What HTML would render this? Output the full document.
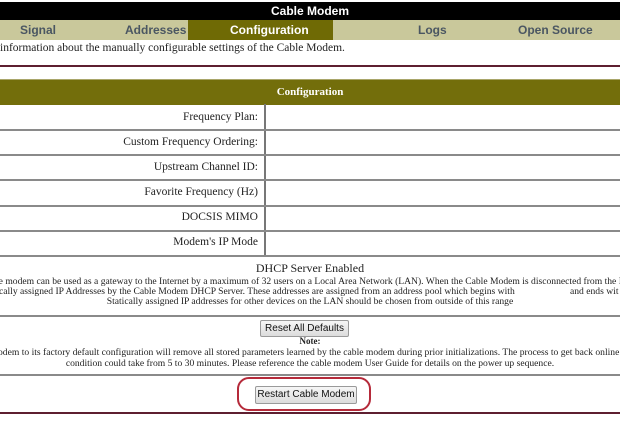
<!DOCTYPE html><html><head><style>
body{margin:0;width:620px;height:423px;overflow:hidden;background:#fff;position:relative;font-family:"Liberation Serif",serif;}
.a{position:absolute;white-space:nowrap}
.nav{font-family:"Liberation Sans",sans-serif;font-weight:bold;font-size:12px;color:#4a5662;top:23px}
.lab{font-size:11.5px;color:#222;right:362px}
.hl{position:absolute;left:0;width:620px;height:2px;background:#8a8a8a}
.btn{position:absolute;white-space:nowrap;font-family:"Liberation Sans",sans-serif;font-size:10px;color:#111;background:linear-gradient(#f6f6f6,#dcdcdc);border:1px solid #9a9a9a;border-radius:2px;text-align:center;line-height:15px}
.t{font-size:10px;color:#222;left:0;width:620px;text-align:center}
.s{font-size:9.6px;color:#222}
</style></head><body>
<div class="a" style="left:0;top:2px;width:620px;height:18px;background:#000"></div>
<div class="a" style="left:0;top:4px;width:620px;text-align:center;color:#fff;font-family:'Liberation Sans',sans-serif;font-weight:bold;font-size:12px">Cable Modem</div>
<div class="a" style="left:0;top:20px;width:620px;height:20px;background:#c9c89b"></div>
<div class="a" style="left:188px;top:20px;width:145px;height:20px;background:#6f6a05"></div>
<div class="a nav" style="left:20px">Signal</div>
<div class="a nav" style="left:125px">Addresses</div>
<div class="a nav" style="left:230px;color:#fff">Configuration</div>
<div class="a nav" style="left:418px">Logs</div>
<div class="a nav" style="left:518px">Open Source</div>
<div class="a" style="left:0;top:42px;font-size:11.5px;color:#222">information about the manually configurable settings of the Cable Modem.</div>
<div class="a" style="left:0;top:65px;width:620px;height:2px;background:#5e1f30"></div>
<div class="a" style="left:0;top:79px;width:620px;height:25px;background:#736e0b;border-top:1px solid #a9a66a"></div>
<div class="a" style="left:0;top:86px;width:620px;text-align:center;color:#fff;font-weight:bold;font-size:11px">Configuration</div>
<div class="a" style="left:264px;top:104px;width:2px;height:152px;background:#777"></div>
<div class="hl" style="top:129px"></div><div class="hl" style="top:154px"></div><div class="hl" style="top:179px"></div><div class="hl" style="top:205px"></div><div class="hl" style="top:230px"></div><div class="hl" style="top:255px"></div>
<div class="a lab" style="top:111px">Frequency Plan:</div>
<div class="a lab" style="top:136px">Custom Frequency Ordering:</div>
<div class="a lab" style="top:161px">Upstream Channel ID:</div>
<div class="a lab" style="top:186px">Favorite Frequency (Hz)</div>
<div class="a lab" style="top:211px">DOCSIS MIMO</div>
<div class="a lab" style="top:236px">Modem's IP Mode</div>
<div class="a t" style="top:261px;font-size:12px">DHCP Server Enabled</div>
<div class="a s" style="left:-4px;top:276px">le modem can be used as a gateway to the Internet by a maximum of 32 users on a Local Area Network (LAN). When the Cable Modem is disconnected from the Int</div>
<div class="a s" style="left:-1px;top:286px">cally assigned IP Addresses by the Cable Modem DHCP Server. These addresses are assigned from an address pool which begins with</div>
<div class="a s" style="left:570px;top:286px">and ends wit</div>
<div class="a t s" style="top:296px">Statically assigned IP addresses for other devices on the LAN should be chosen from outside of this range</div>
<div class="hl" style="top:315px"></div>
<div class="btn" style="left:260px;top:320px;width:87px;height:15px">Reset All Defaults</div>
<div class="a t" style="top:336px;font-weight:bold;font-size:9px">Note:</div>
<div class="a s" style="left:-2px;top:347px">odem to its factory default configuration will remove all stored parameters learned by the cable modem during prior initializations. The process to get back online fr</div>
<div class="a t s" style="top:358px">condition could take from 5 to 30 minutes. Please reference the cable modem User Guide for details on the power up sequence.</div>
<div class="hl" style="top:374px"></div>
<div class="btn" style="left:255px;top:386px;width:100px;height:16px">Restart Cable Modem</div>
<div class="a" style="left:237px;top:377px;width:130px;height:30px;border:2px solid #b52a3a;border-radius:12px"></div>
<div class="a" style="left:0;top:412px;width:620px;height:2px;background:#5e1f30"></div>
</body></html>
